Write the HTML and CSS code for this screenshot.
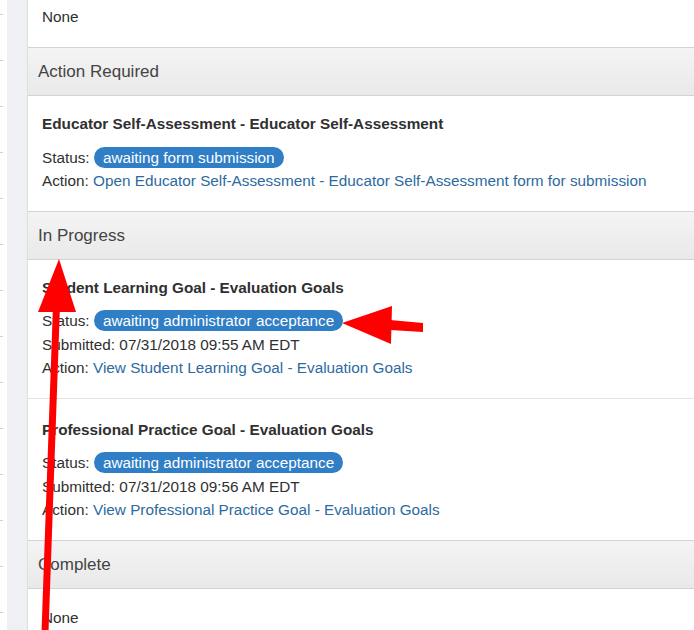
FILE: index.html
```html
<!DOCTYPE html>
<html lang="en">
<head>
<meta charset="utf-8">
<title>Goals and Forms</title>
<link rel="stylesheet" href="styles.css">
</head>
<body>
<div class="page">
  <div class="gutter"><div class="rail"></div></div>
  <main class="main">
    <div class="panel-body first">None</div>

    <section class="panel">
      <h2 class="panel-head">Action Required</h2>
      <div class="item">
        <div class="item-title">Educator Self-Assessment - Educator Self-Assessment</div>
        <div class="line">Status: <span class="badge">awaiting form submission</span></div>
        <div class="line">Action: <a class="link" href="#">Open Educator Self-Assessment - Educator Self-Assessment form for submission</a></div>
      </div>
    </section>

    <section class="panel">
      <h2 class="panel-head">In Progress</h2>
      <div class="item">
        <div class="item-title">Student Learning Goal - Evaluation Goals</div>
        <div class="line">Status: <span class="badge">awaiting administrator acceptance</span></div>
        <div class="line">Submitted: 07/31/2018 09:55 AM EDT</div>
        <div class="line">Action: <a class="link" href="#">View Student Learning Goal - Evaluation Goals</a></div>
      </div>
      <div class="item sep">
        <div class="item-title">Professional Practice Goal - Evaluation Goals</div>
        <div class="line">Status: <span class="badge">awaiting administrator acceptance</span></div>
        <div class="line">Submitted: 07/31/2018 09:56 AM EDT</div>
        <div class="line">Action: <a class="link" href="#">View Professional Practice Goal - Evaluation Goals</a></div>
      </div>
    </section>

    <section class="panel">
      <h2 class="panel-head">Complete</h2>
      <div class="panel-body last">None</div>
    </section>
  </main>

  <!-- red annotation arrows drawn over the page -->
  <svg class="marks" width="694" height="630" viewBox="0 0 694 630" aria-hidden="true">
    <polygon points="59,259 38,312 76,312" fill="#f00"/>
    <polygon points="52.8,311 59.8,311 48.5,632 41.5,632" fill="#f00"/>
    <polygon points="342,323 392,306 391,344" fill="#f00"/>
    <polygon points="390,320 423,323 423,332 390,330" fill="#f00"/>
  </svg>
</div>
</body>
</html>
```
FILE: styles.css
```css
html, body {
  margin: 0;
  padding: 0;
  background: #fff;
}

body {
  font-family: "Liberation Sans", Arial, sans-serif;
  font-size: 15.3px;
  line-height: 24px;
  color: #303030;
}

.page {
  position: relative;
  display: flex;
  width: 694px;
  height: 630px;
  overflow: hidden;
}

/* left sidebar edge */
.gutter {
  width: 7px;
  flex: none;
  background: repeating-linear-gradient(to bottom,
    transparent 0 14px, #cfd2d6 14px 15px, transparent 15px 46px);
  background-size: 3px 100%;
  background-repeat: no-repeat;
  display: flex;
}
.rail {
  margin-left: 7px;
  width: 20px;
  flex: none;
  background: #eef0f3;
  border-right: 1px solid #dcdee1;
}

.main {
  flex: 1;
  margin-left: 21px;
  min-width: 0;
}

.panel-body {
  padding: 5px 14px 18px;
}
.panel-body.last {
  padding-top: 17px;
}

.panel-head {
  margin: 0;
  height: 47px;
  line-height: 47px;
  padding: 0 10px;
  font-size: 17px;
  font-weight: normal;
  color: #444;
  background: linear-gradient(to bottom, #f4f4f4, #e9e9e9);
  border-top: 1px solid #d3d3d3;
  border-bottom: 1px solid #d3d3d3;
}

.item {
  padding: 18px 14px 18px;
}
.item.sep {
  padding-top: 21px;
  border-top: 1px solid #e2e2e2;
}

.item-title {
  font-weight: bold;
  line-height: 20px;
  margin-bottom: 11.5px;
}

.line {
  line-height: 23.5px;
  white-space: nowrap;
}

.badge {
  display: inline-block;
  background: #2f7ec6;
  color: #fff;
  border-radius: 11px;
  padding: 0 9px;
  line-height: 21px;
}

.link {
  color: #2d6aa0;
  text-decoration: none;
}

.marks {
  position: absolute;
  left: 0;
  top: 0;
  pointer-events: none;
}
```
